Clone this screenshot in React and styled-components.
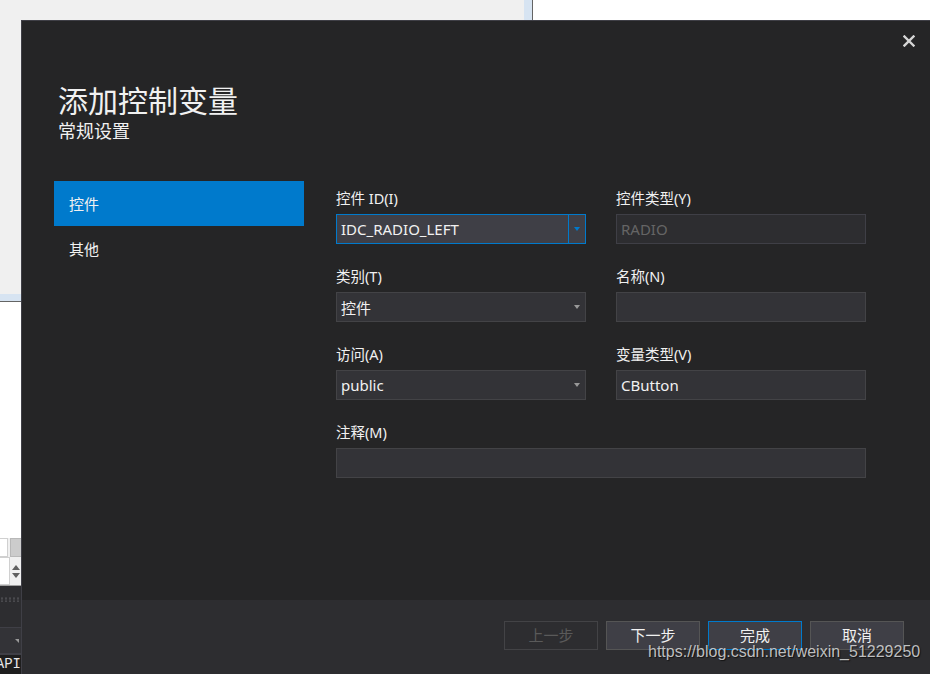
import React from "react";
import styled, { createGlobalStyle } from "styled-components";

const GlobalStyle = createGlobalStyle`
  html, body {
    margin: 0;
    padding: 0;
    background: #f0f0f0;
  }
  body {
    font-family: "Noto Sans", "Noto Sans CJK SC", sans-serif;
  }
`;

const fields = [
  { label: "控件 ID(I)", value: "IDC_RADIO_LEFT", kind: "combo", focused: true },
  { label: "控件类型(Y)", value: "RADIO", kind: "text", disabled: true },
  { label: "类别(T)", value: "控件", kind: "combo" },
  { label: "名称(N)", value: "", kind: "text" },
  { label: "访问(A)", value: "public", kind: "combo" },
  { label: "变量类型(V)", value: "CButton", kind: "text" },
  { label: "注释(M)", value: "", kind: "text", wide: true },
];

const navItems = ["控件", "其他"];

const buttons = [
  { label: "上一步", disabled: true },
  { label: "下一步" },
  { label: "完成", primary: true },
  { label: "取消" },
];

const App = () => {
  return (
    <>
      <GlobalStyle />
      <Screen>
        <TopStrip>
          <IdeGray />
          <IdeSelection />
          <IdeDivider />
          <IdeWhite />
        </TopStrip>

        <SideStrip>
          <SideBlock $h={274} $bg="#f0f0f0" />
          <SideBlock $h={7} $bg="#d7e4f2" />
          <SideBlock $h={1} $bg="#646464" />
          <SideBlock $h={236} $bg="#ffffff" />
          <ToolRow>
            <MiniInput />
            <MiniButton />
          </ToolRow>
          <ToolRow $h={28}>
            <MiniInput $tall />
            <Spinner>
              <SpinArrow />
              <SpinArrow $down />
            </Spinner>
          </ToolRow>
          <SideBlock $h={1} $bg="#a0a0a0" />
          <DarkBlock>
            <Dots />
          </DarkBlock>
          <SideBlock $h={1} $bg="#3f3f46" />
          <ComboStub>
            <StubArrow />
          </ComboStub>
          <SideBlock $h={2} $bg="#3f3f46" />
          <ApiBlock>API</ApiBlock>
        </SideStrip>

        <Dialog>
          <Header>
            <TitleBlock>
              <Title>添加控制变量</Title>
              <Subtitle>常规设置</Subtitle>
            </TitleBlock>
            <CloseButton aria-label="close">
              <svg width="12" height="12" viewBox="0 0 12 12">
                <path
                  d="M1.5 1.5 L10.5 10.5 M10.5 1.5 L1.5 10.5"
                  stroke="#d6d6d6"
                  strokeWidth="2.4"
                  strokeLinecap="square"
                />
              </svg>
            </CloseButton>
          </Header>

          <Body>
            <Sidebar>
              {navItems.map((item, i) => (
                <NavItem key={item} $active={i === 0}>
                  {item}
                </NavItem>
              ))}
            </Sidebar>

            <Form>
              {fields.map((f) => (
                <Field key={f.label} $wide={f.wide}>
                  <Label>{f.label}</Label>
                  <Box $focused={f.focused} $disabled={f.disabled}>
                    <BoxText $disabled={f.disabled}>{f.value}</BoxText>
                    {f.kind === "combo" && (
                      <DropButton $focused={f.focused}>
                        <Caret $focused={f.focused} />
                      </DropButton>
                    )}
                  </Box>
                </Field>
              ))}
            </Form>
          </Body>

          <Footer>
            {buttons.map((b) => (
              <Button key={b.label} $primary={b.primary} disabled={b.disabled}>
                {b.label}
              </Button>
            ))}
          </Footer>
          <Watermark>https://blog.csdn.net/weixin_51229250</Watermark>
        </Dialog>
      </Screen>
    </>
  );
};

const Screen = styled.div`
  width: 930px;
  height: 674px;
  overflow: hidden;
  display: grid;
  grid-template-columns: 21px 1fr;
  grid-template-rows: 20px 1fr;
`;

const TopStrip = styled.div`
  grid-column: 1 / -1;
  display: flex;
`;

const IdeGray = styled.div`
  width: 524px;
  background: #f0f0f0;
`;

const IdeSelection = styled.div`
  width: 8px;
  background: #d7e4f2;
`;

const IdeDivider = styled.div`
  width: 1px;
  background: #646464;
`;

const IdeWhite = styled.div`
  flex: 1;
  background: #ffffff;
`;

const SideStrip = styled.div`
  display: flex;
  flex-direction: column;
  overflow: hidden;
`;

const SideBlock = styled.div`
  flex: none;
  height: ${(p) => p.$h}px;
  background: ${(p) => p.$bg};
`;

const ToolRow = styled.div`
  flex: none;
  height: ${(p) => p.$h || 19}px;
  display: flex;
  gap: 2px;
  background: #f0f0f0;
`;

const MiniInput = styled.div`
  width: ${(p) => (p.$tall ? 11 : 7)}px;
  height: ${(p) => (p.$tall ? 26 : 17)}px;
  background: #ffffff;
  border: 1px solid #d0d0d0;
  border-left: none;
`;

const MiniButton = styled.div`
  flex: 1;
  height: 19px;
  background: #cccccc;
  border: 1px solid #b8b8b8;
  border-right: none;
  box-sizing: border-box;
`;

const Spinner = styled.div`
  flex: 1;
  display: flex;
  flex-direction: column;
  justify-content: center;
  align-items: flex-end;
  gap: 3px;
  padding-right: 1px;
`;

const SpinArrow = styled.div`
  width: 0;
  height: 0;
  border-left: 4px solid transparent;
  border-right: 4px solid transparent;
  ${(p) =>
    p.$down
      ? "border-top: 5px solid #606060;"
      : "border-bottom: 5px solid #606060;"}
`;

const DarkBlock = styled.div`
  flex: none;
  height: 41px;
  background: #2d2d30;
  display: flex;
  align-items: flex-start;
  padding-top: 11px;
  box-sizing: border-box;
`;

const Dots = styled.div`
  width: 100%;
  height: 5px;
  background-image: radial-gradient(circle, #4a4a4e 1px, transparent 1.3px);
  background-size: 4px 3px;
`;

const ComboStub = styled.div`
  flex: none;
  height: 25px;
  background: #333337;
  display: flex;
  align-items: center;
  justify-content: flex-end;
  padding-right: 2px;
`;

const StubArrow = styled.div`
  width: 0;
  height: 0;
  border-left: 4px solid transparent;
  border-top: 4px solid #999999;
`;

const ApiBlock = styled.div`
  flex: 1;
  background: #1e1e1e;
  color: #e8e8e8;
  font-family: "Liberation Mono", monospace;
  font-size: 14px;
  line-height: 19px;
  text-align: right;
  white-space: nowrap;
  direction: rtl;
  overflow: hidden;
`;

const Dialog = styled.div`
  position: relative;
  width: 909px;
  height: 654px;
  box-sizing: border-box;
  background: #252526;
  border-left: 1px solid #3f3f46;
  border-top: 1px solid #3f3f46;
  display: flex;
  flex-direction: column;
  color: #f1f1f1;
`;

const Header = styled.div`
  display: flex;
  justify-content: space-between;
  align-items: flex-start;
  padding: 8px 9px 0 36px;
`;

const TitleBlock = styled.div`
  padding-top: 54px;
`;

const Title = styled.div`
  font-size: 30px;
  line-height: 36px;
  color: #f1f1f1;
`;

const Subtitle = styled.div`
  font-size: 18px;
  line-height: 24px;
  color: #f1f1f1;
`;

const CloseButton = styled.button`
  width: 24px;
  height: 24px;
  padding: 0;
  border: none;
  background: transparent;
  display: flex;
  align-items: center;
  justify-content: center;
`;

const Body = styled.div`
  flex: 1;
  display: flex;
  gap: 32px;
  padding: 38px 0 0 32px;
`;

const Sidebar = styled.div`
  width: 250px;
  display: flex;
  flex-direction: column;
`;

const NavItem = styled.div`
  height: 45px;
  display: flex;
  align-items: center;
  padding-left: 15px;
  font-size: 15px;
  color: #f1f1f1;
  background: ${(p) => (p.$active ? "#007acc" : "transparent")};
`;

const Form = styled.div`
  padding-top: 7px;
  display: grid;
  grid-template-columns: 250px 250px;
  column-gap: 30px;
  row-gap: 22px;
  align-content: start;
`;

const Field = styled.div`
  display: flex;
  flex-direction: column;
  gap: 6px;
  grid-column: ${(p) => (p.$wide ? "1 / -1" : "auto")};
`;

const Label = styled.div`
  font-size: 14.5px;
  line-height: 20px;
  color: #f1f1f1;
`;

const Box = styled.div`
  height: 30px;
  box-sizing: border-box;
  display: flex;
  align-items: center;
  border: 1px solid
    ${(p) => (p.$focused ? "#007acc" : p.$disabled ? "#3f3f46" : "#434346")};
  background: ${(p) =>
    p.$focused ? "#3f3f46" : p.$disabled ? "#2d2d30" : "#333337"};
`;

const BoxText = styled.div`
  flex: 1;
  padding-left: 4px;
  font-size: 15px;
  color: ${(p) => (p.$disabled ? "#656565" : "#f1f1f1")};
  white-space: nowrap;
`;

const DropButton = styled.div`
  width: 16px;
  height: 100%;
  display: flex;
  align-items: center;
  justify-content: center;
  border-left: 1px solid ${(p) => (p.$focused ? "#007acc" : "transparent")};
`;

const Caret = styled.div`
  width: 0;
  height: 0;
  border-left: 3.5px solid transparent;
  border-right: 3.5px solid transparent;
  border-top: 4px solid ${(p) => (p.$focused ? "#007acc" : "#999999")};
`;

const Footer = styled.div`
  height: 74px;
  box-sizing: border-box;
  background: #2d2d30;
  display: flex;
  justify-content: flex-end;
  align-items: flex-start;
  gap: 8px;
  padding: 21px 26px 0 0;
`;

const Button = styled.button`
  width: 94px;
  height: 29px;
  box-sizing: border-box;
  font-family: "Noto Sans", "Noto Sans CJK SC", sans-serif;
  font-size: 15px;
  line-height: 1;
  color: ${(p) => (p.disabled ? "#5a5a5a" : "#f1f1f1")};
  background: ${(p) => (p.disabled ? "#2d2d30" : "#3f3f46")};
  border: 1px solid
    ${(p) => (p.$primary ? "#007acc" : p.disabled ? "#434346" : "#555555")};
  padding: 0;
`;

const Watermark = styled.div`
  position: absolute;
  left: 626px;
  top: 621px;
  font-family: "Liberation Sans", Arial, sans-serif;
  font-size: 16px;
  line-height: 20px;
  color: rgba(220, 220, 220, 0.85);
  text-shadow: 1px 1px 1px rgba(0, 0, 0, 0.6);
  white-space: nowrap;
  pointer-events: none;
`;

export default App;
